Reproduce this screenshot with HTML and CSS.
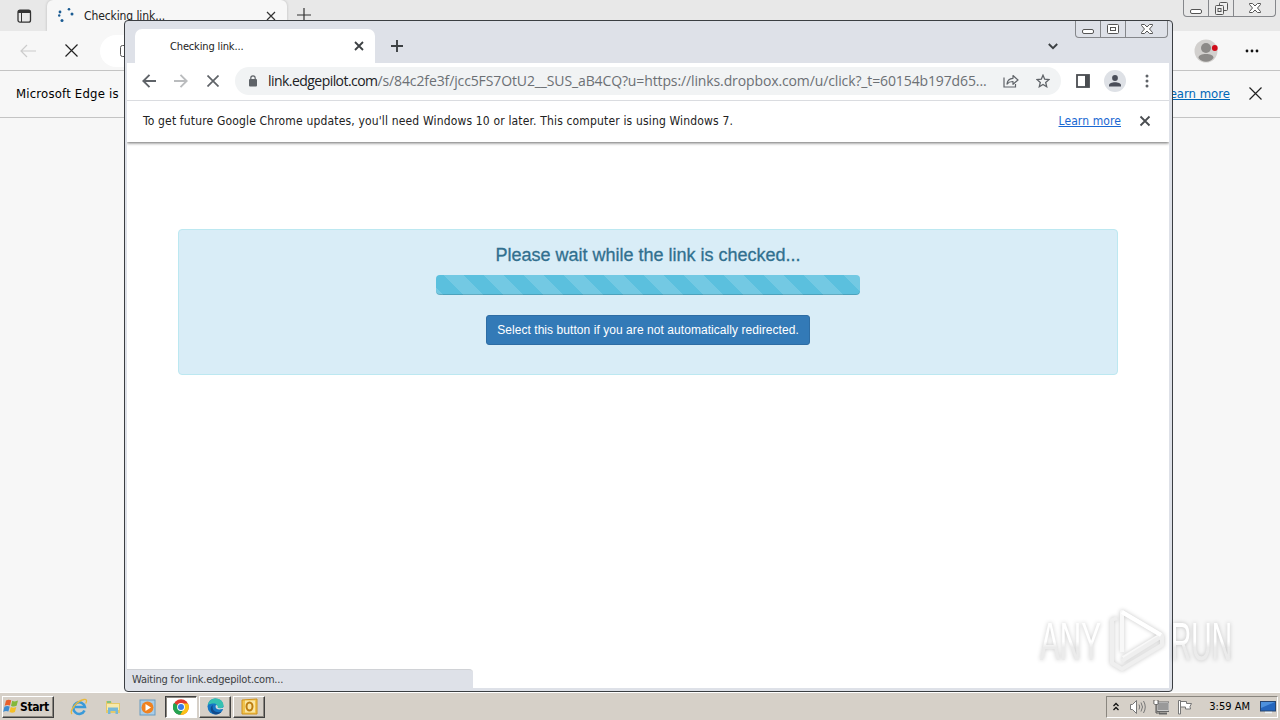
FILE: index.html
```html
<!DOCTYPE html>
<html lang="en">
<head>
  <meta charset="UTF-8">
  <meta name="viewport" content="width=device-width, initial-scale=1.0">
  <title>Checking link...</title>
  <link rel="stylesheet" href="styles.css">
</head>
<body>
  <div class="desktop">
    <!-- Edge window in the background -->
    <div class="edge">
      <div class="edge-tabs">
        <svg class="edge-menu" width="16" height="16" viewBox="0 0 16 16"><rect x="2" y="2.2" width="12.5" height="12" rx="2" fill="none" stroke="#333" stroke-width="1.3"/><path d="M2 3.5a1.5 1.5 0 0 1 1.5-1.5h9.500a1.500 1.500 0 0 1 1.500 1.500V5H2z" fill="#333"/><path d="M5.500 5v9" stroke="#333"/></svg>
        <div class="edge-tab">
          <svg width="18" height="18" viewBox="0 0 18 18" fill="#1b5c93"><circle cx="3" cy="5" r="1.400"/><circle cx="2.200" cy="8.500" r="1.200"/><circle cx="5" cy="13.500" r="1.500"/><circle cx="12" cy="2.200" r="1.300"/><circle cx="15" cy="7" r="1.500"/></svg>
          <span class="edge-tab-title">Checking link...</span>
          <svg class="edge-tab-close" width="10" height="10" viewBox="0 0 10 10"><path d="M1 1l8 8M9 1l-8 8" stroke="#333" stroke-width="1.200"/></svg>
        </div>
        <svg class="edge-new" width="14" height="14" viewBox="0 0 14 14"><path d="M7 0v14M0 7h14" stroke="#333" stroke-width="1.200"/></svg>
        <div class="win-buttons edge-win">
          <span><svg width="12" height="13" viewBox="0 0 12 13"><rect x=".5" y="7.500" width="11" height="4" rx="1.500" fill="#fff" stroke="#555"/></svg></span>
          <span><svg width="13" height="13" viewBox="0 0 13 13" fill="#eee" stroke="#555"><rect x="4.500" y=".5" width="8" height="8" rx="1"/><rect x=".5" y="3.500" width="8" height="9" rx="1"/><rect x="3" y="6.500" width="3" height="3"/></svg></span>
          <span><svg width="12" height="10" viewBox="0 0 12 10"><path d="M.5.5h3L6 3 8.500.5h3v1L8.500 5l3 3.500v1h-3L6 7 3.500 9.500h-3v-1L3.500 5 .5 1.500z" fill="#fff" stroke="#555"/></svg></span>
        </div>
      </div>
      <div class="edge-toolbar">
        <svg class="edge-back" width="16" height="14" viewBox="0 0 16 14"><path d="M16 7H1M7 1L1 7l6 6" fill="none" stroke="#ccc" stroke-width="1.200"/></svg>
        <svg class="edge-stop" width="13" height="13" viewBox="0 0 13 13"><path d="M.5.5l12 12M12.500.5l-12 12" stroke="#222" stroke-width="1.200"/></svg>
        <div class="edge-address"><svg width="12" height="12" viewBox="0 0 12 12"><rect x="1.500" y=".5" width="10" height="11" rx="2" fill="none" stroke="#555"/></svg></div>
        <svg class="edge-avatar" width="24" height="24" viewBox="0 0 24 24"><circle cx="12" cy="12" r="11.500" fill="#d2d0ce"/><circle cx="12" cy="9" r="5" fill="#8c8a88"/><path d="M4.500 19c0-3 3.200-4 7.500-4s7.500 1 7.500 4c-2 2.500-4.500 3.700-7.500 3.700S6.500 21.500 4.500 19z" fill="#8c8a88"/><circle cx="20.800" cy="9" r="2.900" fill="#d00c1a"/></svg>
        <svg class="edge-more" width="14" height="4" viewBox="0 0 14 4" fill="#111"><circle cx="2" cy="2" r="1.400"/><circle cx="7" cy="2" r="1.400"/><circle cx="12" cy="2" r="1.400"/></svg>
      </div>
      <div class="edge-infobar">
        <span class="edge-message">Microsoft Edge is</span>
        <a class="edge-link">Learn more</a>
        <svg width="13" height="13" viewBox="0 0 13 13"><path d="M.5.5l12 12M12.500.5l-12 12" stroke="#222" stroke-width="1.200"/></svg>
      </div>
    </div>

    <!-- Chrome window -->
    <div class="chrome">
      <div class="chrome-tabs">
        <div class="chrome-tab">
          <span class="chrome-tab-title">Checking link...</span>
          <svg width="10" height="10" viewBox="0 0 10 10"><path d="M1 1l8 8M9 1l-8 8" stroke="#3c4043" stroke-width="1.800"/></svg>
        </div>
        <svg class="chrome-new" width="12" height="12" viewBox="0 0 12 12"><path d="M6 0v12M0 6h12" stroke="#3c4043" stroke-width="1.900"/></svg>
        <svg class="chrome-chevron" width="10" height="7" viewBox="0 0 10 7"><path d="M.8 1L5 5.200 9.200 1" fill="none" stroke="#3c4043" stroke-width="1.900"/></svg>
        <div class="win-buttons chrome-win">
          <span><svg width="12" height="5" viewBox="0 0 12 5"><rect x=".5" y=".5" width="11" height="4" rx="1.500" fill="#fff" stroke="#555"/></svg></span>
          <span><svg width="12" height="10" viewBox="0 0 12 10" fill="#fff" stroke="#555"><rect x=".5" y=".5" width="11" height="9" rx="1"/><rect x="3.500" y="3.500" width="5" height="3"/></svg></span>
          <span><svg width="12" height="10" viewBox="0 0 12 10"><path d="M.5.5h3L6 3 8.500.5h3v1L8.500 5l3 3.500v1h-3L6 7 3.500 9.500h-3v-1L3.500 5 .5 1.500z" fill="#fff" stroke="#555"/></svg></span>
        </div>
      </div>
      <div class="chrome-toolbar">
        <svg class="nav-back" width="14" height="14" viewBox="0 0 14 14"><path d="M14 7H1.500M7.500.8L1.300 7l6.200 6.200" fill="none" stroke="#5f6368" stroke-width="1.900"/></svg>
        <svg class="nav-forward" width="14" height="14" viewBox="0 0 14 14"><path d="M0 7h12.500M6.500.8L12.700 7l-6.200 6.200" fill="none" stroke="#babcbe" stroke-width="1.900"/></svg>
        <svg class="nav-stop" width="12" height="12" viewBox="0 0 12 12"><path d="M.5.500l11 11M11.500.5l-11 11" stroke="#5f6368" stroke-width="1.700"/></svg>
        <div class="omnibox">
          <svg width="10" height="12" viewBox="0 0 10 12"><rect x="1" y="4" width="8" height="7.500" rx="1" fill="#5f6368"/><path d="M2.800 4.500V3a2.200 2.200 0 0 1 4.400 0v1.500" fill="none" stroke="#5f6368" stroke-width="1.200"/></svg>
          <span class="url"><span class="url-host">link.edgepilot.com</span><span class="url-path">/s/84c2fe3f/jcc5FS7OtU2__SUS_aB4CQ?u=https://links.dropbox.com/u/click?_t=60154b197d65...</span></span>
          <svg class="share" width="16" height="14" viewBox="0 0 16 14" fill="none" stroke="#5f6368" stroke-width="1.200"><path d="M1 3.500v9.500h11.500v-3"/><path d="M4 10c.3-3.700 2.500-5.500 6-5.700V1.500l5 4.500-5 4.300V7.500C7.500 7.400 5.500 8.200 4 10z" stroke-linejoin="round"/></svg>
          <svg class="star" width="14" height="14" viewBox="0 0 14 14"><path d="M7 1.200l1.700 4 4.300.4-3.300 2.800 1 4.300L7 10.400l-3.700 2.300 1-4.300L1 5.600l4.300-.4z" fill="none" stroke="#5f6368" stroke-width="1.300"/></svg>
        </div>
        <svg class="side-panel" width="14" height="14" viewBox="0 0 14 14"><rect x="1" y="1" width="12" height="12" fill="none" stroke="#4a4d51" stroke-width="1.800"/><path d="M9 1h4v12H9z" fill="#4a4d51"/></svg>
        <svg class="profile" width="22" height="22" viewBox="0 0 22 22"><circle cx="11" cy="11" r="11" fill="#dee1e6"/><circle cx="11" cy="8" r="2.900" fill="#4a4e59"/><path d="M5 16.500v-1.300c0-2 3-3 6-3s6 1 6 3v1.300z" fill="#4a4e59"/></svg>
        <svg class="kebab" width="4" height="14" viewBox="0 0 4 14" fill="#5f6368"><circle cx="2" cy="2" r="1.500"/><circle cx="2" cy="7" r="1.500"/><circle cx="2" cy="12" r="1.500"/></svg>
      </div>
      <div class="chrome-infobar">
        <span class="chrome-message">To get future Google Chrome updates, you'll need Windows 10 or later. This computer is using Windows 7.</span>
        <a class="chrome-link">Learn more</a>
        <svg width="12" height="12" viewBox="0 0 12 12"><path d="M1.500 1.500l9 9M10.500 1.500l-9 9" stroke="#4a4d51" stroke-width="1.800"/></svg>
      </div>
      <div class="page">
        <div class="alert">
          <h4>Please wait while the link is checked...</h4>
          <div class="progress"></div>
          <button class="btn">Select this button if you are not automatically redirected.</button>
        </div>
        <div class="status">Waiting for link.edgepilot.com...</div>
      </div>
    </div>

    <svg class="watermark" width="240" height="80" viewBox="0 0 240 80">
      <defs>
        <linearGradient id="fade" x1="0" y1="0" x2="0" y2="1">
          <stop offset="0.500" stop-color="#fff"/>
          <stop offset="0.600" stop-color="#ebebeb"/>
        </linearGradient>
      </defs>
      <g fill="url(#fade)" font-size="53">
        <text x="10" y="60" textLength="61" lengthAdjust="spacingAndGlyphs">ANY</text>
        <text x="141" y="60" textLength="61" lengthAdjust="spacingAndGlyphs">RUN</text>
      </g>
      <g fill="none" stroke-width="4" stroke-linejoin="round">
        <path d="M92 52V12l39 23-38 23" stroke="#f8f8f8"/>
        <path d="M87 18l-5 2v43l10 6 40-24v-9L92 61" stroke="#efefef"/>
        <path d="M92 12l39 23" stroke="#fff"/>
      </g>
    </svg>

    <div class="taskbar">
      <div class="start">
        <svg width="17" height="17" viewBox="0 0 17 17"><path d="M3 2.500c2-1.200 3.500-1 5.200-.2L7 7.500c-1.700-.8-3.400-.8-5.300.2z" fill="#e8602c"/><path d="M9.200 2.800c2 .9 3.600.8 5.800-.2l-1.400 5.200c-2 1-3.600 1-5.600.1z" fill="#83b83a"/><path d="M1.400 8.800c2-1 3.500-1 5.300-.2l-1.300 5c-1.700-.8-3.400-.7-5.200.3z" fill="#3d8bd0"/><path d="M7.800 9c1.900.9 3.500.9 5.500 0l-1.400 5c-2 1-3.500.9-5.400 0z" fill="#f5bf27"/></svg>
        <span>Start</span>
      </div>
      <div class="launch">
        <svg width="18" height="18" viewBox="0 0 18 18" fill="none"><path d="M14.500 12.500a5.800 5.800 0 1 1 .4-3.500H5" stroke="#3a9ad9" stroke-width="2.600"/><path d="M2 16C-1 13 7 2.500 14 1.500c3-.4 3 1.500 1.700 4" stroke="#e9b93c" stroke-width="1.300"/></svg>
        <svg width="18" height="18" viewBox="0 0 18 18"><path d="M2 3h5l1 2h8v10H2z" fill="#e5c969"/><path d="M3 6h12v6H3z" fill="#f7e9aa"/><path d="M4 16V9.500h10V16h-2.500v-3h-5v3z" fill="#76b8d8"/><path d="M3 3h4v2H3z" fill="#83c182"/></svg>
        <svg width="18" height="18" viewBox="0 0 18 18"><rect x="2" y="2" width="15" height="15" fill="#a9cde8" stroke="#6a9bc0"/><circle cx="9.500" cy="9.500" r="6" fill="#ef8221"/><path d="M7.500 6v7l5.500-3.500z" fill="#fff"/></svg>
      </div>
      <div class="task active">
        <svg width="16" height="16" viewBox="0 0 16 16"><circle cx="8" cy="8" r="7.800" fill="#e33b2e"/><path d="M1.200 4.100L6 12l-.5 3.400A7.800 7.800 0 0 1 1.200 4.100z" fill="#25a351"/><path d="M8 8l-7-4a7.800 7.800 0 0 0 6.500 11.800l4-6z" fill="#25a351"/><path d="M8 4.500h7a7.800 7.800 0 0 1-7.700 11.300L11 9.500z" fill="#fbc116"/><circle cx="8" cy="8" r="3.900" fill="#fff"/><circle cx="8" cy="8" r="3" fill="#3a7ce8"/></svg>
      </div>
      <div class="task">
        <svg width="17" height="17" viewBox="0 0 17 17"><circle cx="8.500" cy="8.500" r="8" fill="#1676c4"/><path d="M.7 7C2 2.500 5 .5 8.500.5c5 0 8 3.300 8 7 0 3-4.500 4-6.500 2.500 1-3-1-4.500-3-4.500C4.500 5.500 2 6 .7 7z" fill="#35c1b1"/><path d="M6 7c-2 5 3 8.500 8.500 6.800-2 2.200-4.500 3-7 2.500C3.500 15 2 9 6 7z" fill="#114a8b"/><path d="M9 7c-1.500 3 1 5.500 6.500 4l2 0v-2c-3 1.500-6 1.500-7 .8.700-1 .2-2.500-1.500-2.800z" fill="#d7dcdc"/></svg>
      </div>
      <div class="task">
        <svg width="17" height="17" viewBox="0 0 17 17"><path d="M1 2l15-1v15H1z" fill="#f1c34b" stroke="#cf911b"/><rect x="4" y="2.500" width="10" height="12" fill="#fae6a3"/><ellipse cx="8.500" cy="8.500" rx="3" ry="4" fill="none" stroke="#bd7d10" stroke-width="2"/></svg>
      </div>
      <div class="tray">
        <svg class="tray-up" width="6" height="9" viewBox="0 0 6 9"><path d="M.5 4L3 1.500 5.500 4M.5 8L3 5.500 5.500 8" fill="none" stroke="#111" stroke-width="1.300"/></svg>
        <svg class="tray-sound" width="18" height="16" viewBox="0 0 18 16"><path d="M1.500 5.500h2l4-4v13l-4-4h-2z" fill="#fff" stroke="#777"/><path d="M10 5.500q1.500 2.500 0 5M12 3.500q3 4.500 0 9M14.500 2q3.500 6 0 12" fill="none" stroke="#777"/></svg>
        <svg class="tray-net" width="16" height="16" viewBox="0 0 16 16"><rect x="4.500" y="3.500" width="11" height="8.500" fill="#999" stroke="#fff"/><rect x="4" y="3" width="12" height="9.500" fill="none" stroke="#666"/><path d="M6 14.500h8" stroke="#666" stroke-width="2"/><path d="M1 1v4h4V1M3 5v9h4" fill="none" stroke="#555"/><path d="M1.500 2h3v3h-3z" fill="#fff"/></svg>
        <svg class="tray-flag" width="16" height="16" viewBox="0 0 16 16"><path d="M1.500 1.500h2V15h-2zM3.500 2.500h6v2h5l-1.500 3 .5 2.500h-5V8h-5z" fill="#fff" stroke="#777"/></svg>
        <span class="clock">3:59 AM</span>
        <svg class="tray-desktop" width="16" height="14" viewBox="0 0 16 14"><rect x=".5" y="1.500" width="15" height="9.500" fill="#2566bd" stroke="#27456f"/><path d="M1 2h14L1 8z" fill="#4d91dd"/><path d="M5 12.500h7" stroke="#e9f0f7" stroke-width="1.500"/></svg>
      </div>
    </div>
  </div>
</body>
</html>
```
FILE: styles.css
```css
* {
  box-sizing: border-box;
}
body {
  margin: 0;
  font-family: "DejaVu Sans Condensed", "DejaVu Sans", "Noto Sans", sans-serif;
  font-size: 12px;
  color: #222;
}
svg {
  display: block;
  flex: none;
}
.desktop {
  position: relative;
  display: flex;
  flex-direction: column;
  width: 1280px;
  height: 720px;
  overflow: hidden;
  white-space: nowrap;
}

/* Edge */
.edge {
  flex: 1;
  background-color: #f7f7f7;
}
.edge-tabs {
  display: flex;
  height: 31px;
  background-color: #e8e8e8;
}
.edge-menu {
  margin: 8px 15px 0 16px;
}
.edge-tab {
  display: flex;
  width: 240px;
  height: 32px;
  padding: 7px 11px 0 10px;
  background-color: #f7f7f7;
  border-radius: 6px 6px 0 0;
  box-shadow: 0 0 3px rgba(0, 0, 0, 0.2);
}
.edge-tab-title {
  margin-left: 9px;
  line-height: 18px;
  letter-spacing: -0.1px;
}
.edge-tab-close {
  margin: 4px 0 0 auto;
}
.edge-new {
  margin: 8px 0 0 10px;
}
.edge-toolbar {
  position: relative;
  display: flex;
  align-items: center;
  height: 40px;
  padding: 0 21px 0 20px;
  background-color: #f7f7f7;
  border-bottom: 1px solid #c4c4c4;
}
.edge-stop {
  margin-left: 29px;
}
.edge-address {
  width: 800px;
  height: 32px;
  margin-left: 22px;
  padding: 10px 19px;
  background-color: #fff;
  border-radius: 16px;
}
.edge-avatar {
  margin-left: auto;
}
.edge-more {
  margin-left: 27px;
}
.edge-infobar {
  display: flex;
  align-items: center;
  height: 47px;
  padding: 0 18px 2px 16px;
  border-bottom: 1px solid #c4c4c4;
  font-size: 13px;
  color: #000;
}
.edge-message {
  letter-spacing: 0.2px;
}
.edge-link {
  margin: 0 19px 0 auto;
  color: #0067b8;
  text-decoration: underline;
}

/* Caption buttons */
.win-buttons {
  display: flex;
  border: 1px solid #85878b;
  border-top: 0;
  border-radius: 0 0 4px 4px;
}
.win-buttons span {
  display: flex;
  align-items: center;
  justify-content: center;
  width: 25px;
  border-right: 1px solid #85878b;
}
.win-buttons span:last-child {
  width: 41px;
  border-right: 0;
}
.edge-win {
  height: 17px;
  margin: 0 4px 0 auto;
}

/* Chrome */
.chrome {
  position: absolute;
  left: 124px;
  top: 20px;
  display: flex;
  flex-direction: column;
  width: 1049px;
  height: 672px;
  padding: 0 3px 3px 2px;
  background-color: #dee1e8;
  border: 1px solid #3b3e42;
  border-radius: 4px;
}
.chrome-tabs {
  display: flex;
  height: 42px;
}
.chrome-tab {
  display: flex;
  align-items: center;
  justify-content: space-between;
  width: 240px;
  height: 34px;
  margin: 8px 0 0 8px;
  padding: 0 11px 0 35px;
  background-color: #fff;
  border-radius: 7px 7px 0 0;
}
.chrome-tab-title {
  font-size: 11px;
  letter-spacing: -0.15px;
}
.chrome-new {
  margin: 19px 0 0 16px;
}
.chrome-chevron {
  margin: 22px 17px 0 auto;
}
.chrome-win {
  height: 17px;
  margin-right: 1px;
}
.chrome-win span:first-child {
  padding-top: 4px;
}
.chrome-toolbar {
  display: flex;
  align-items: center;
  height: 38px;
  padding: 0 20px 2px 15px;
  background-color: #fff;
  border-bottom: 1px solid #dadce0;
}
.nav-forward {
  margin-left: 18px;
}
.nav-stop {
  margin-left: 19px;
}
.omnibox {
  display: flex;
  align-items: center;
  width: 826px;
  height: 28px;
  margin-left: 16px;
  padding: 0 11px 0 13px;
  background-color: #f1f3f4;
  border-radius: 14px;
}
.url {
  width: 723px;
  margin-left: 10px;
  padding-top: 1px;
  font-family: "Open Sans", "Noto Sans", sans-serif;
  font-size: 14px;
  line-height: 28px;
}
.url-host {
  letter-spacing: -0.55px;
  color: #202124;
}
.url-path {
  letter-spacing: -0.12px;
  color: #6c7075;
}
.share {
  margin-left: 12px;
}
.star {
  margin-left: auto;
}
.side-panel {
  margin-left: 15px;
}
.profile {
  margin-left: 14px;
}
.kebab {
  margin-left: auto;
}
.chrome-infobar {
  z-index: 1;
  display: flex;
  align-items: center;
  height: 41px;
  padding: 0 18px 1px 16px;
  background-color: #fff;
  box-shadow: 0 1px 3px rgba(0, 0, 0, 0.6);
  clip-path: inset(0 0 -6px 0);
}
.chrome-message {
  letter-spacing: 0.16px;
}
.chrome-link {
  margin: 0 18px 0 auto;
  letter-spacing: 0.1px;
  color: #1967d2;
  text-decoration: underline;
}

/* Link check page */
.page {
  position: relative;
  flex: 1;
  padding: 87px 51px 0;
  background-color: #fff;
  font-family: "Liberation Sans", Arial, sans-serif;
}
.alert {
  display: flex;
  flex-direction: column;
  align-items: center;
  height: 146px;
  padding-top: 15px;
  background-color: #d9edf7;
  border: 1px solid #bce8f1;
  border-radius: 4px;
}
.alert h4 {
  margin: 0 0 10px;
  font-size: 18px;
  font-weight: 500;
  line-height: 20px;
  color: #31708f;
  -webkit-text-stroke: 0.3px #31708f;
}
.progress {
  width: 424px;
  height: 20px;
  margin-bottom: 20px;
  background-color: #5bc0de;
  background-image: linear-gradient(45deg, rgba(255, 255, 255, 0.15) 25%, transparent 25%, transparent 50%, rgba(255, 255, 255, 0.15) 50%, rgba(255, 255, 255, 0.15) 75%, transparent 75%, transparent);
  background-position: 8px 0;
  background-size: 40px 40px;
  border-radius: 4px;
  box-shadow: inset 0 -1px 0 rgba(0, 0, 0, 0.15);
}
.btn {
  width: 324px;
  height: 30px;
  padding: 0;
  font-family: inherit;
  font-size: 12px;
  letter-spacing: 0.06px;
  color: #fff;
  background-color: #337ab7;
  border: 1px solid #2e6da4;
  border-radius: 3px;
}
.status {
  position: absolute;
  left: 0;
  bottom: 0;
  width: 346px;
  height: 19px;
  padding-left: 5px;
  font-family: "DejaVu Sans Condensed", "DejaVu Sans", sans-serif;
  font-size: 11px;
  line-height: 20px;
  letter-spacing: -0.2px;
  color: #3c4043;
  background-color: #dee1e8;
  border-top: 1px solid #d0d2d6;
  border-radius: 0 4px 0 0;
}

.watermark {
  position: absolute;
  left: 1030px;
  top: 600px;
  font-family: "Liberation Sans", Arial, sans-serif;
  filter: drop-shadow(0 0 2px rgba(0, 0, 0, 0.22));
}

/* Taskbar */
.taskbar {
  display: flex;
  align-items: center;
  height: 28px;
  padding: 0 2px;
  background-color: #d6d0c8;
  border-top: 1px solid #fff;
}
.start,
.task {
  display: flex;
  align-items: center;
  height: 22px;
  border: 1px solid;
  border-color: #fff #404040 #404040 #fff;
  box-shadow: inset -1px -1px 0 #8a867f;
}
.start {
  width: 52px;
  font-size: 12px;
  font-weight: bold;
  color: #000;
}
.start span {
  letter-spacing: -0.4px;
}
.launch {
  display: flex;
  gap: 16px;
  margin: 0 9px 0 16px;
}
.task {
  justify-content: center;
  width: 32px;
  margin-right: 2px;
}
.task.active {
  background-color: #fff;
  border-color: #404040 #fff #fff #404040;
  box-shadow: inset 1px 1px 0 #8a867f;
}
.tray {
  display: flex;
  align-items: center;
  width: 172px;
  height: 22px;
  margin-left: auto;
  padding: 0 1px 0 6px;
  border: 1px solid;
  border-color: #8a867f #fff #fff #8a867f;
}
.tray-sound {
  margin-left: 10px;
}
.tray-net {
  margin-left: 6px;
}
.tray-flag {
  margin-left: 8px;
}
.clock {
  margin: 0 10px 0 auto;
  font-size: 11px;
  color: #000;
}
```
